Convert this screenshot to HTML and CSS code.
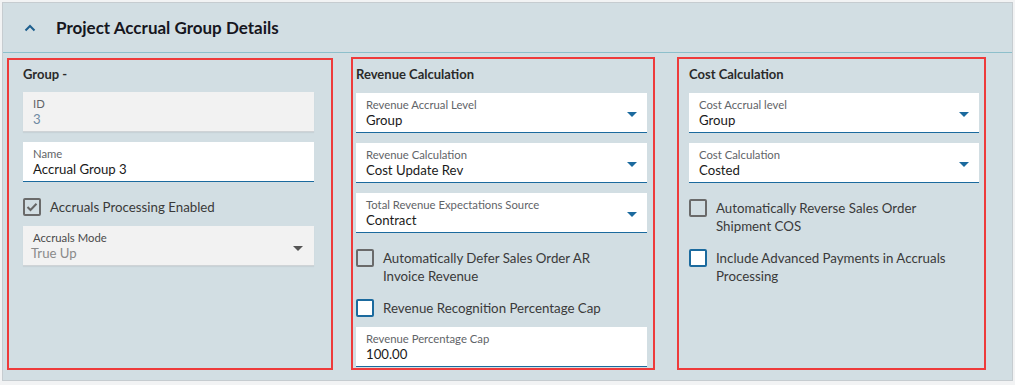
FILE: index.html
```html
<!DOCTYPE html>
<html lang="en">
<head>
    <meta charset="UTF-8">
    <title>Project Accrual Group Details</title>
    <link rel="stylesheet" href="styles.css">
</head>
<body>
    <div class="page">
        <div class="panel">
            <div class="panel-header">
                <svg class="chevron" width="12" height="8" viewBox="0 0 12 8">
                    <path d="M1.5 6.5 L6 2 L10.5 6.5" fill="none" stroke="#1e5f8e" stroke-width="2"/>
                </svg>
                <h1 class="panel-title">Project Accrual Group Details</h1>
            </div>

            <div class="panel-body">
                <div class="section section-group">
                    <h2 class="section-title">Group -</h2>
                    <div class="field field-readonly">
                        <span class="field-label">ID</span>
                        <span class="field-value muted-blue">3</span>
                    </div>
                    <div class="field">
                        <span class="field-label">Name</span>
                        <span class="field-value">Accrual Group 3</span>
                    </div>
                    <label class="check">
                        <span class="box box-disabled checked">
                            <svg width="12" height="10" viewBox="0 0 12 10"><path d="M1.5 5 L4.5 8 L10.5 1.8" fill="none" stroke="#666" stroke-width="2"/></svg>
                        </span>
                        <span class="check-text muted">Accruals Processing Enabled</span>
                    </label>
                    <div class="field field-readonly select">
                        <span class="field-label dark">Accruals Mode</span>
                        <span class="field-value muted">True Up</span>
                        <span class="arrow arrow-grey"></span>
                    </div>
                </div>

                <div class="section section-revenue">
                    <h2 class="section-title">Revenue Calculation</h2>
                    <div class="field select">
                        <span class="field-label">Revenue Accrual Level</span>
                        <span class="field-value">Group</span>
                        <span class="arrow"></span>
                    </div>
                    <div class="field select">
                        <span class="field-label">Revenue Calculation</span>
                        <span class="field-value">Cost Update Rev</span>
                        <span class="arrow"></span>
                    </div>
                    <div class="field select">
                        <span class="field-label">Total Revenue Expectations Source</span>
                        <span class="field-value">Contract</span>
                        <span class="arrow"></span>
                    </div>
                    <label class="check">
                        <span class="box box-disabled"></span>
                        <span class="check-text muted">Automatically Defer Sales Order AR Invoice Revenue</span>
                    </label>
                    <label class="check">
                        <span class="box"></span>
                        <span class="check-text">Revenue Recognition Percentage Cap</span>
                    </label>
                    <div class="field">
                        <span class="field-label">Revenue Percentage Cap</span>
                        <span class="field-value">100.00</span>
                    </div>
                </div>

                <div class="section section-cost">
                    <h2 class="section-title">Cost Calculation</h2>
                    <div class="field select">
                        <span class="field-label">Cost Accrual level</span>
                        <span class="field-value">Group</span>
                        <span class="arrow"></span>
                    </div>
                    <div class="field select">
                        <span class="field-label">Cost Calculation</span>
                        <span class="field-value">Costed</span>
                        <span class="arrow"></span>
                    </div>
                    <label class="check">
                        <span class="box box-disabled"></span>
                        <span class="check-text muted">Automatically Reverse Sales Order Shipment COS</span>
                    </label>
                    <label class="check">
                        <span class="box"></span>
                        <span class="check-text">Include Advanced Payments in Accruals Processing</span>
                    </label>
                </div>
            </div>
        </div>
    </div>
</body>
</html>
```

FILE: styles.css
```css
:root {
    --panel-bg: #d2dee3;
    --panel-border: #c6ccd0;
    --header-line: #8dbfcb;
    --red: #ee3b3b;
    --blue: #1b6a9e;
    --text: #1a1a1a;
    --label: #5f6468;
    --muted: #737779;
    --readonly-bg: #f2f2f2;
}

* {
    box-sizing: border-box;
}

body {
    margin: 0;
    background-color: #f2f3f4;
    font-family: Lato, "Noto Sans", sans-serif;
    color: var(--text);
}

.page {
    padding: 2px;
}

.panel {
    width: 1011px;
    height: 379px;
    background-color: var(--panel-bg);
    border: 1px solid var(--panel-border);
}

.panel-header {
    height: 50px;
    display: flex;
    align-items: center;
    padding-left: 21px;
    border-bottom: 1px solid var(--header-line);
}

.chevron {
    margin-right: 20px;
    margin-top: 1px;
}

.panel-title {
    margin: 0;
    font-size: 17px;
    font-weight: 700;
    color: #16161e;
}

.panel-body {
    display: flex;
    align-items: flex-start;
    padding: 4px 0 0 4px;
}

.section {
    height: 313px;
    border: 2px solid var(--red);
    display: flex;
    flex-direction: column;
    gap: 10px;
}

.section-group {
    margin-top: 1px;
    width: 326px;
    height: 312px;
    padding: 5px 17px 0 14px;
}

.section-revenue {
    margin-left: 18px;
    width: 304px;
    padding: 6px 6px 0 3px;
}

.section-cost {
    margin-left: 22px;
    width: 309px;
    padding: 6px 5px 0 10px;
}

.section-title {
    margin: 0;
    height: 18px;
    font-size: 13px;
    font-weight: 700;
    color: #2a2a2a;
    line-height: 18px;
}

.section-group .section-title {
    margin-bottom: -1px;
}

.field {
    position: relative;
    height: 40px;
    background-color: #fff;
    border-bottom: 1px solid var(--blue);
    padding: 4px 10px 0 10px;
    display: flex;
    flex-direction: column;
}

.field-readonly {
    background-color: var(--readonly-bg);
    border-bottom: 1px solid #cfd3d6;
    box-shadow: 0 1px 1px rgba(0, 0, 0, 0.05);
}

.field-label {
    font-size: 11.3px;
    line-height: 15px;
    color: var(--label);
}

.field-label.dark {
    color: #4a4a4a;
}

.field-value {
    font-size: 13.2px;
    line-height: 17px;
    color: var(--text);
}

.muted-blue {
    color: #6f8aa3;
}

.muted {
    color: var(--muted);
}

.field-readonly .field-value.muted {
    margin-left: -2px;
    color: #8a8a8a;
}

.arrow {
    position: absolute;
    right: 10px;
    top: 19px;
    width: 0;
    height: 0;
    border-left: 5px solid transparent;
    border-right: 5px solid transparent;
    border-top: 5px solid var(--blue);
}

.arrow-grey {
    border-top-color: #555;
    top: 20px;
    right: 11px;
}

.check {
    display: flex;
    align-items: flex-start;
    gap: 9px;
    padding: 6px 0 0 0;
}

.box {
    flex: none;
    width: 18px;
    height: 18px;
    border: 2px solid var(--blue);
    border-radius: 2px;
    background-color: #fff;
    display: flex;
    align-items: center;
    justify-content: center;
}

.box-disabled {
    border-color: #6a6a6a;
    background-color: transparent;
}

.check-text {
    max-width: 240px;
    margin-bottom: -2px;
    font-size: 13.3px;
    line-height: 18px;
    color: #3a3a3a;
}
```
